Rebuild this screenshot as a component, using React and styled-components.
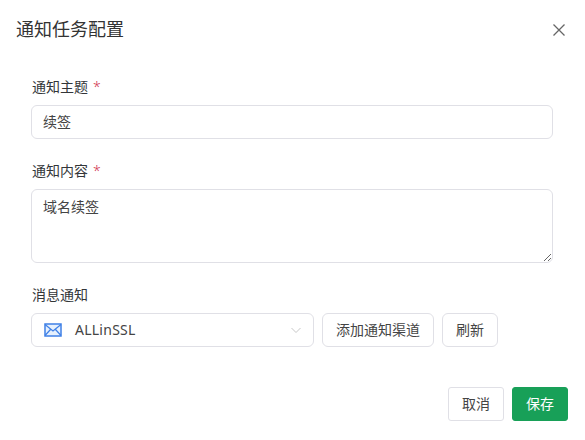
import styled, { createGlobalStyle } from "styled-components";

const Global = createGlobalStyle`
  html, body {
    margin: 0;
    padding: 0;
    background: #fff;
  }
  body, input, textarea, button {
    font-family: "Noto Sans", "Noto Sans CJK SC", sans-serif;
  }
`;

const Dialog = styled.div`
  width: 585px;
  height: 440px;
  box-sizing: border-box;
  background: #fff;
  color: #333639;
  display: flex;
  flex-direction: column;
  overflow: hidden;
`;

const Header = styled.div`
  height: 58px;
  padding: 0 20px 0 16px;
  display: flex;
  align-items: center;
  justify-content: space-between;
`;

const Title = styled.h2`
  margin: 0;
  font-size: 18px;
  font-weight: 400;
  line-height: 26px;
  color: #333;
`;

const Close = styled.button`
  width: 12px;
  height: 14px;
  margin-top: 2px;
  padding: 0;
  border: 0;
  background: none;
  color: #666;
  display: flex;
  align-items: center;
  justify-content: center;

  svg {
    width: 14px;
    height: 14px;
    flex: none;
  }
`;

const Form = styled.div`
  padding: 17px 32px 0 31px;
  display: flex;
  flex-direction: column;
  gap: 20px;
`;

const Field = styled.div`
  display: flex;
  flex-direction: column;
  gap: 6px;
`;

const Label = styled.label`
  padding-left: 1px;
  font-size: 14px;
  line-height: 24px;
  height: 24px;
  color: #333639;

  em {
    margin-left: 5px;
    font-style: normal;
    font-weight: 300;
    color: #d03050;
  }
`;

const Input = styled.input`
  box-sizing: border-box;
  width: 100%;
  height: 34px;
  padding: 0 11px 2px;
  border: 1px solid #e0e0e6;
  border-radius: 6px;
  outline: none;
  font-size: 14px;
  color: #444;
`;

const TextArea = styled.textarea`
  display: block;
  box-sizing: border-box;
  width: 100%;
  height: 74px;
  padding: 6px 11px;
  border: 1px solid #e0e0e6;
  border-radius: 6px;
  outline: none;
  resize: vertical;
  font-size: 14px;
  line-height: 22px;
  color: #444;
`;

const Row = styled.div`
  display: flex;
  gap: 8px;
`;

const Select = styled.div`
  box-sizing: border-box;
  width: 283px;
  height: 34px;
  padding: 0 11px 0 12px;
  border: 1px solid #e0e0e6;
  border-radius: 6px;
  display: flex;
  align-items: center;
  font-size: 14px;
  color: #444;

  span {
    flex: 1;
    margin: 0 0 2px 13px;
    letter-spacing: 0.25px;
  }
`;

const Button = styled.button`
  box-sizing: border-box;
  height: 34px;
  width: ${(p) => p.$width || 56}px;
  padding: 0 0 2px;
  border: 1px solid ${(p) => (p.$primary ? "#18a058" : "#e0e0e6")};
  border-radius: ${(p) => (p.$square ? 3 : 6)}px;
  background: ${(p) => (p.$primary ? "#18a058" : "#fff")};
  color: ${(p) => (p.$primary ? "#fff" : "#444")};
  font-size: 14px;
`;

const Footer = styled.div`
  margin-top: 40px;
  padding-right: 17px;
  display: flex;
  justify-content: flex-end;
  gap: 8px;
`;

const MailIcon = () => (
  <svg width="18" height="14" viewBox="0 0 18 14" fill="none" stroke="#3f80e6" strokeWidth="1.5">
    <rect x="1" y="1" width="16" height="12" fill="#e6f0fd" />
    <path d="M1 1.500 9 8l8-6.500M1 12.500 6.500 6.500M17 12.500 11.500 6.500" strokeWidth="1.200" />
  </svg>
);

const Chevron = () => (
  <svg width="12" height="12" viewBox="0 0 12 12" fill="none" stroke="#c8c8c8" strokeWidth="1">
    <path d="M1.500 4 6 8.500 10.500 4" />
  </svg>
);

const CloseIcon = () => (
  <svg viewBox="0 0 14 14" fill="none" stroke="currentColor" strokeWidth="1.300">
    <path d="M1.500 1.500 12.500 12.500M12.500 1.500 1.500 12.500" />
  </svg>
);

export default function App() {
  return (
    <Dialog>
      <Global />
      <Header>
        <Title>通知任务配置</Title>
        <Close aria-label="关闭">
          <CloseIcon />
        </Close>
      </Header>
      <Form>
        <Field>
          <Label>
            通知主题<em>*</em>
          </Label>
          <Input readOnly value="续签" />
        </Field>
        <Field>
          <Label>
            通知内容<em>*</em>
          </Label>
          <TextArea readOnly value="域名续签" />
        </Field>
        <Field>
          <Label>消息通知</Label>
          <Row>
            <Select>
              <MailIcon />
              <span>ALLinSSL</span>
              <Chevron />
            </Select>
            <Button $width={112}>添加通知渠道</Button>
            <Button>刷新</Button>
          </Row>
        </Field>
      </Form>
      <Footer>
        <Button $square>取消</Button>
        <Button $square $primary>
          保存
        </Button>
      </Footer>
    </Dialog>
  );
}
